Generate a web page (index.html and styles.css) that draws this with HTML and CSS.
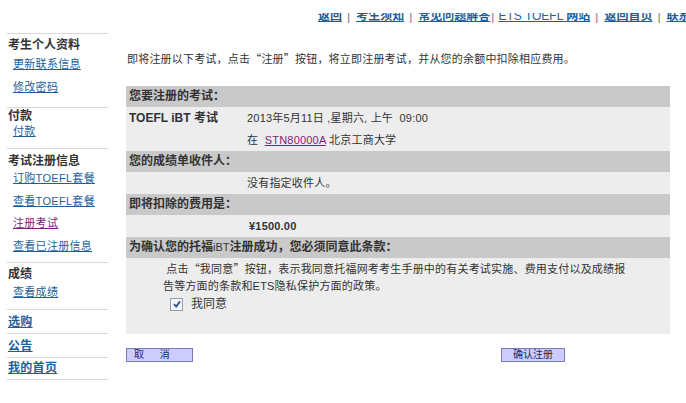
FILE: index.html
```html
<!DOCTYPE html>
<html lang="zh-CN">
<head>
  <meta charset="UTF-8">
  <title>注册考试</title>
  <link rel="stylesheet" href="styles.css">
</head>
<body>
  <div class="topnav">
    <div class="topnav-line">
      <a href="#">返回</a><span class="sep">|</span><a href="#">考生须知</a><span class="sep">|</span><a href="#">常见问题解答</a><span class="sep sep-tight">|</span><a href="#"><span class="thin">ETS TOEFL </span>网站</a><span class="sep">|</span><a href="#">返回首页</a><span class="sep">|</span><a href="#">联系我们</a>
    </div>
  </div>

  <div class="page">
    <div class="side">
      <div class="side-sec s1">
        <div class="side-head">考生个人资料</div>
        <a href="#" class="l-first">更新联系信息</a>
        <a href="#">修改密码</a>
      </div>
      <div class="side-sec s2">
        <div class="side-head">付款</div>
        <a href="#" class="l-first">付款</a>
      </div>
      <div class="side-sec s3">
        <div class="side-head">考试注册信息</div>
        <a href="#" class="l-first">订购TOEFL套餐</a>
        <a href="#">查看TOEFL套餐</a>
        <a href="#" class="visited l-short">注册考试</a>
        <a href="#">查看已注册信息</a>
      </div>
      <div class="side-sec s4">
        <div class="side-head">成绩</div>
        <a href="#" class="l-first">查看成绩</a>
      </div>
      <div class="side-sec s5">
        <a href="#" class="side-top">选购</a>
      </div>
      <div class="side-sec s5">
        <a href="#" class="side-top">公告</a>
      </div>
      <div class="side-sec s7">
        <a href="#" class="side-top">我的首页</a>
      </div>
    </div>

    <div class="main">
      <p class="intro">即将注册以下考试，点击<span class="q">“</span>注册<span class="q">”</span>按钮，将立即注册考试，并从您的余额中扣除相应费用。</p>

      <div class="summary">
        <div class="sum-head">您要注册的考试：</div>
        <div class="sum-row tall">
          <div class="sum-label">TOEFL iBT 考试</div>
          <div class="sum-val">
            <div>2013年5月11日 ,星期六, 上午&nbsp; 09:00</div>
            <div>在&nbsp; <a href="#" class="visited">STN80000A</a> 北京工商大学</div>
          </div>
        </div>

        <div class="sum-head">您的成绩单收件人：</div>
        <div class="sum-row">
          <div class="sum-label"></div>
          <div class="sum-val">没有指定收件人。</div>
        </div>

        <div class="sum-head">即将扣除的费用是：</div>
        <div class="sum-row">
          <div class="sum-label"></div>
          <div class="sum-val price">¥1500.00</div>
        </div>

        <div class="sum-head">为确认您的托福<span class="thin">iBT</span>注册成功，您必须同意此条款：</div>
        <div class="terms">
          <p>&nbsp;点击<span class="q">“</span>我同意<span class="q">”</span>按钮，表示我同意托福网考考生手册中的有关考试实施、费用支付以及成绩报<br>告等方面的条款和ETS隐私保护方面的政策。</p>
          <label class="agree"><span class="check"><svg width="10" height="10" viewBox="0 0 10 10"><path d="M2 5.2 L4.2 7.6 L8 2.2" fill="none" stroke="#2f4f8f" stroke-width="1.8"/></svg></span>我同意</label>
        </div>
      </div>

      <div class="actions">
        <button class="btn btn-cancel">取 消</button>
        <button class="btn">确认注册</button>
      </div>
    </div>
  </div>
</body>
</html>
```

FILE: styles.css
```css
body {
  margin: 0;
  font-family: "Liberation Sans", "Noto Sans CJK SC", sans-serif;
  font-size: 11px;
  color: #333;
  background: #fff;
}

a {
  color: #1d5f9c;
}

a.visited {
  color: #7d1f7d;
}

.q {
  font-family: "Noto Sans CJK SC", sans-serif;
  font-feature-settings: "fwid";
}

.topnav {
  margin-top: 13px;
  height: 11px;
  padding-left: 318px;
  overflow: hidden;
  display: flex;
  align-items: flex-end;
  white-space: nowrap;
}

.topnav-line {
  line-height: 15px;
  font-size: 12px;
  font-weight: bold;
}

.topnav-line .thin {
  font-weight: normal;
}

.sep {
  color: #777;
  font-weight: normal;
  margin: 0 6px 0 5px;
}

.sep-tight {
  margin: 0 4px 0 1px;
}

.page {
  display: flex;
  align-items: flex-start;
}

/* sidebar */
.side {
  width: 101px;
  margin-left: 7px;
  margin-top: 9px;
  border-bottom: 1px solid #d6d6d6;
}

.side-sec {
  display: flex;
  flex-direction: column;
  align-items: flex-start;
  border-top: 1px solid #d6d6d6;
}

.side-sec a {
  line-height: 16px;
  margin-top: 7px;
  margin-left: 6px;
  letter-spacing: 0.3px;
}

.side-head {
  font-size: 12px;
  font-weight: bold;
  line-height: 16px;
  margin-left: 1px;
}

.side-sec a.l-first {
  margin-top: 3px;
}

.side-sec a.l-short {
  margin-top: 6px;
}

.side-sec a.side-top {
  margin: 0 0 0 1px;
  font-size: 12px;
  font-weight: bold;
}

.s1 { padding: 3px 0 12px; }
.s2 { padding: 0 0 9px; }
.s2 a.l-first { margin-top: -1px; }
.s3 { padding: 4px 0 8px; }
.s3 a.l-first { margin-top: 1px; }
.s4 { padding: 3px 0 9px; }
.s4 a.l-first { margin-top: 2px; }
.s5 { padding: 4px 0 3px; }
.s7 { padding: 2px 0 3px; }

/* main area */
.main {
  width: 544px;
  margin-left: 18px;
}

.intro {
  margin: 26px 0 19px 1px;
  line-height: 16px;
  letter-spacing: 0.2px;
}

.summary {
  background: #ededed;
}

.sum-head {
  background: #c9c9c9;
  height: 21px;
  line-height: 21px;
  padding-left: 3px;
  font-size: 12px;
  font-weight: bold;
}

.sum-head .thin {
  font-weight: normal;
  font-size: 11px;
}

.sum-row {
  display: flex;
  height: 22px;
  line-height: 22px;
}

.sum-row.tall {
  height: 44px;
}

.sum-label {
  width: 118px;
  padding-left: 3px;
  font-size: 12px;
  font-weight: bold;
}

.sum-val {
  letter-spacing: 0.2px;
}

.price {
  padding-left: 2px;
  font-size: 11px;
  font-weight: bold;
}

.terms {
  height: 76px;
  padding: 2px 0 0 37px;
  box-sizing: border-box;
}

.terms p {
  margin: 0;
  line-height: 17px;
  letter-spacing: 0.2px;
}

.agree {
  display: flex;
  align-items: center;
  margin: 1px 0 0 7px;
  line-height: 16px;
  font-size: 12px;
}

.check {
  width: 11px;
  height: 11px;
  border: 1px solid #8c9db4;
  background: #f6f6f6;
  display: flex;
  align-items: center;
  justify-content: center;
  margin-right: 8px;
}

.actions {
  display: flex;
  justify-content: space-between;
  margin-top: 14px;
  padding-right: 105px;
}

.btn {
  height: 14px;
  padding: 0;
  width: 64px;
  border: 1px solid #7b7bb8;
  background: #ccccff;
  color: #2a2a55;
  font-family: "Liberation Sans", "Noto Sans CJK SC", sans-serif;
  font-size: 10px;
  line-height: 12px;
}

.btn-cancel {
  width: 67px;
  text-align: left;
  padding-left: 7px;
  word-spacing: 13px;
}
```
